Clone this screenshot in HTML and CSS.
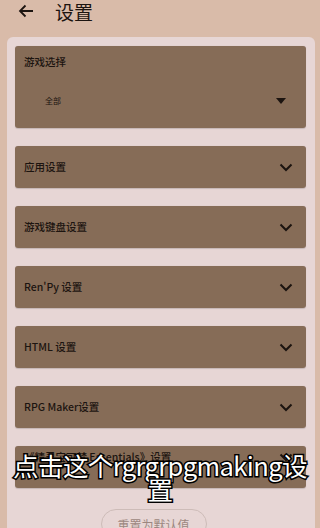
FILE: index.html
```html
<!DOCTYPE html>
<html lang="zh">
<head>
<meta charset="utf-8">
<link rel="stylesheet" href="styles.css">
</head>
<body>
<div class="screen">
  <header class="topbar">
    <svg class="back" width="16" height="14" viewBox="0 0 16 14"><path d="M15 7H2M7.5 1.5 2 7l5.5 5.5" fill="none" stroke="#1c1410" stroke-width="1.8"/></svg>
    <h1 class="title">设置</h1>
  </header>
  <main class="panel">
    <section class="item item-tall">
      <div class="label">游戏选择</div>
      <div class="select-row">
        <span class="select-value">全部</span>
        <svg class="tri" width="10" height="6" viewBox="0 0 10 6"><path d="M0 0h10L5 6z" fill="#1c1410"/></svg>
      </div>
    </section>
    <section class="item"><span class="label">应用设置</span><svg class="chev" width="14" height="9" viewBox="0 0 14 9"><path d="M1.5 1.5 7 7l5.5-5.5" fill="none" stroke="#1c1410" stroke-width="2"/></svg></section>
    <section class="item"><span class="label">游戏键盘设置</span><svg class="chev" width="14" height="9" viewBox="0 0 14 9"><path d="M1.5 1.5 7 7l5.5-5.5" fill="none" stroke="#1c1410" stroke-width="2"/></svg></section>
    <section class="item"><span class="label">Ren'Py 设置</span><svg class="chev" width="14" height="9" viewBox="0 0 14 9"><path d="M1.5 1.5 7 7l5.5-5.5" fill="none" stroke="#1c1410" stroke-width="2"/></svg></section>
    <section class="item"><span class="label">HTML 设置</span><svg class="chev" width="14" height="9" viewBox="0 0 14 9"><path d="M1.5 1.5 7 7l5.5-5.5" fill="none" stroke="#1c1410" stroke-width="2"/></svg></section>
    <section class="item"><span class="label">RPG Maker设置</span><svg class="chev" width="14" height="9" viewBox="0 0 14 9"><path d="M1.5 1.5 7 7l5.5-5.5" fill="none" stroke="#1c1410" stroke-width="2"/></svg></section>
    <section class="item item-last"><span class="label">《精灵宝可梦 Essentials》设置</span><svg class="chev" width="14" height="9" viewBox="0 0 14 9"><path d="M1.5 1.5 7 7l5.5-5.5" fill="none" stroke="#1c1410" stroke-width="2"/></svg></section>
    <div class="reset-wrap"><button class="reset">重置为默认值</button></div>
  </main>
  <div class="caption">点击这个rgrgrpgmaking设置</div>
</div>
</body>
</html>
```

FILE: styles.css
```css
* { box-sizing: border-box; }
html, body { margin: 0; padding: 0; }
body {
  width: 320px;
  height: 528px;
  overflow: hidden;
  background: #d9bba9;
  font-family: "Noto Sans CJK SC", "Noto Sans", sans-serif;
  color: #1c1410;
}
.screen { position: relative; width: 320px; height: 528px; overflow: hidden; }
.topbar {
  height: 37px;
  display: flex;
  align-items: flex-start;
  padding: 3px 0 0 18px;
}
.back { margin-top: 1px; }
.title {
  margin: -4px 0 0 21px;
  font-size: 19px;
  font-weight: 400;
  line-height: 26px;
  color: #1c1410;
}
.panel {
  margin: 0 5px 0 7px;
  background: #e7d6d5;
  border-radius: 6px;
  padding: 9px 9px 0 8px;
  display: flex;
  flex-direction: column;
  gap: 18px;
  height: 520px;
}
.item {
  background: #866c57;
  border-radius: 3px;
  height: 42px;
  flex: none;
  display: flex;
  align-items: center;
  justify-content: space-between;
  padding: 0 13px 0 9px;
  box-shadow: 0 0.5px 1px rgba(0,0,0,0.15);
}
.item-last { align-items: flex-start; padding-top: 4px; }
.item-last .chev { margin-top: 3px; }
.item-tall {
  height: 82px;
  flex-direction: column;
  align-items: stretch;
  justify-content: flex-start;
  padding: 9px 20px 0 9px;
}
.label { font-size: 10.5px; line-height: 14px; color: #1c1410; font-weight: 500; }
.select-row {
  display: flex;
  justify-content: space-between;
  align-items: center;
  margin-top: 26px;
  padding-left: 21px;
}
.select-value { font-size: 8px; color: #1c1410; }
.tri { margin-top: 1px; }
.reset-wrap { display: flex; justify-content: center; margin-top: 3px; padding-right: 14px; }
.reset {
  font-family: "Noto Sans CJK SC", sans-serif;
  font-size: 12px;
  color: #9c8780;
  background: transparent;
  border: 1px solid #cdbcb8;
  border-radius: 16px;
  width: 106px;
  height: 30px;
  padding: 0;
}
.caption {
  position: absolute;
  left: 10px;
  right: 10px;
  top: 453px;
  text-align: center;
  font-size: 25.5px;
  line-height: 24px;
  color: #fff;
  font-family: "Noto Sans CJK SC", sans-serif;
  -webkit-text-stroke: 3px #000;
  paint-order: stroke fill;
  letter-spacing: -0.6px;
}
```
